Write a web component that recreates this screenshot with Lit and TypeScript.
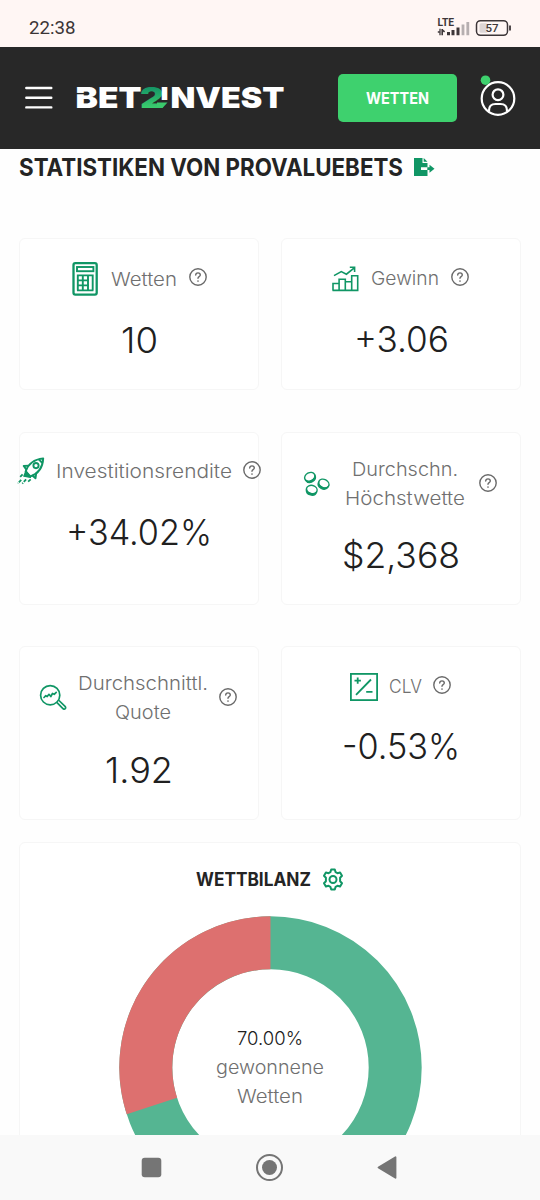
import { LitElement, html, css, svg } from "lit";
import { customElement, property } from "lit/decorators.js";

const icons: Record<string, unknown> = {
  calculator: html`<svg width="28" height="34" viewBox="0 0 28 34" fill="none" stroke="currentColor">
    <rect x="2.5" y="1.2" width="23.2" height="31.4" rx="1.8" stroke-width="2.3" />
    <rect x="6" y="5" width="16.4" height="4.2" stroke-width="1.9" />
    <path d="M6 13.4H22.4M6 18.4H18M6 23.4H18M6 28.4H22.4M6.8 12.5v16M11.8 12.5v16M17 12.5v16M21.7 12.5v16" stroke-width="1.9" />
  </svg>`,
  growth: html`<svg width="28" height="26" viewBox="0 0 28 26" fill="none" stroke="currentColor" stroke-width="1.6">
    <path d="M1.5 24.4h25.2V9.7h-6v14.7M20.7 15.7h-6.4M14.3 24.4V13.3H8.1v11.1M8.1 17.5H2v6.9" />
    <path d="M3 9.6 10.3 5.6 15.4 8.2 23.3 1.8M18.8 1.3h4.8v4.7" />
  </svg>`,
  rocket: html`<svg width="28" height="28" viewBox="0 0 28 28" fill="none" stroke="currentColor" stroke-width="1.9" stroke-linejoin="round">
    <path d="M8.6 14.5C11 7.500 16.500 2.400 26.200 1.400 25.800 11 21 16.700 13.500 19.400Z" />
    <circle cx="19" cy="8.600" r="2.600" />
    <path d="M11.800 8.700 6.700 8.900l2.700 3.700M19.300 15.700l-.8 5.600-3.400-3" />
    <path d="M9 13.800 6.800 19.200 13.500 20.400Z" fill="currentColor" stroke-width="1.200" />
    <path d="M22 2.600l3.400 3.400" />
    <path d="M5.600 17.400 2.600 20.400M4.200 22.800.8 26.400M9.100 22.400l-3.800 4.200M13.700 22.400l-3.200 2.800" stroke-width="1.800" stroke-dasharray="3.400 1.200" />
  </svg>`,
  coins: html`<svg width="28" height="26" viewBox="0 0 28 26" fill="none" stroke="currentColor">
    ${[[6.8, 5.9, -28], [20.8, 12.6, 28], [8.8, 18.6, 14]].map(
      ([x, y, r]) => svg`<g transform="translate(${x} ${y}) rotate(${r})">
        <ellipse rx="5.4" ry="4.200" stroke-width="1.400" />
        <path d="M-5.400 .6C-5 7.200 5 7.200 5.400.6 4 5-4 5-5.400.6Z" fill="currentColor" stroke-width="1.300" />
      </g>`
    )}
  </svg>`,
  search: html`<svg width="28" height="28" viewBox="0 0 28 28" fill="none" stroke="currentColor" stroke-width="1.7" stroke-linecap="round" stroke-linejoin="round">
    <circle cx="11.200" cy="11.200" r="9.600" />
    <path d="M5 13.500 6.800 11.700 8.200 12.600 10 10.300 11.800 12.500 13.500 9.500 15.200 10.300 17.200 8.300M18 18.600l6.200 6.200q1.200.8 2-.1t.1-2L20 16.500" />
  </svg>`,
  clv: html`<svg width="28" height="28" viewBox="0 0 28 28" fill="none" stroke="currentColor" stroke-width="1.8">
    <rect x=".9" y=".9" width="26.200" height="26.200" /><path d="M4.500 7.600h6.400M7.700 4.400v6.400M6 21.800 21 6.500M16.200 18.900h6.300" />
  </svg>`,
};

@customElement("help-icon")
class HelpIcon extends LitElement {
  static styles = css`:host { display: block; flex: none; width: 18px; height: 18px; color: #6a6a6a; } svg { display: block; }`;
  render() {
    return html`<svg width="18" height="18" viewBox="0 0 18 18" fill="none" stroke="currentColor" stroke-width="1.4">
      <circle cx="9" cy="9" r="8.2" />
      <path d="M6.7 7.1Q6.7 4.9 9 4.9T11.3 7.1C11.3 8.7 9 8.6 9 10.2" stroke-linecap="round" />
      <circle cx="9" cy="13" r=".85" fill="currentColor" stroke="none" />
    </svg>`;
  }
}

interface Stat {
  key: string;
  icon: string;
  lines: { text: string; width: number }[];
  value: string;
  valueWidth: number;
}

const stats: Stat[] = [
  { key: "bets", icon: "calculator", lines: [{ text: "Wetten", width: 66 }], value: "10", valueWidth: 37 },
  { key: "profit", icon: "growth", lines: [{ text: "Gewinn", width: 68 }], value: "+3.06", valueWidth: 95 },
  { key: "roi", icon: "rocket", lines: [{ text: "Investitionsrendite", width: 176 }], value: "+34.02%", valueWidth: 146 },
  { key: "stake", icon: "coins", lines: [{ text: "Durchschn.", width: 106 }, { text: "Höchstwette", width: 120 }], value: "$2,368", valueWidth: 118 },
  { key: "odds", icon: "search", lines: [{ text: "Durchschnittl.", width: 130 }, { text: "Quote", width: 56 }], value: "1.92", valueWidth: 68 },
  { key: "clv", icon: "clv", lines: [{ text: "CLV", width: 33 }], value: "-0.53%", valueWidth: 118 },
];

/** One line of text whose glyph run is spread to a given width. */
@customElement("fitted-text")
class FittedText extends LitElement {
  @property() text = "";
  @property({ type: Number }) width = 0;
  @property({ type: Number }) height = 29;
  @property({ type: Number }) base = 21;
  static styles = css`:host { display: block; flex: none; } svg { display: block; overflow: visible; } text { fill: currentColor; }`;
  render() {
    return html`<svg width=${this.width} height=${this.height}>
      <text x="0" y=${this.base} textLength=${this.width} lengthAdjust="spacingAndGlyphs">${this.text}</text>
    </svg>`;
  }
}

@customElement("stat-card")
class StatCard extends LitElement {
  @property({ attribute: false }) stat!: Stat;
  static styles = css`
    :host { display: block; box-sizing: border-box; border: 1.5px solid #f6f6f6; border-radius: 6px; background: #fff; }
    .card { display: flex; flex-direction: column; align-items: center; }
    .head { display: flex; align-items: center; justify-content: center; gap: 12px; padding-right: 2px; color: #707070; font: 350 18.5px Inter, sans-serif; }
    .icon { display: block; flex: none; color: #109665; }
    .icon svg { display: block; }
    .label { display: flex; flex-direction: column; align-items: center; }
    .value { color: #202020; font: 350 35px Inter, sans-serif; }
    .bets { padding-top: 23px; } .bets .value { margin-top: 22px; } .bets help-icon { margin-top: -4px; }
    .bets .head { padding-right: 1px; }
    .profit { padding-top: 25px; } .profit .value { margin-top: 24px; } .profit help-icon { margin-top: -3px; }
    .roi { padding-top: 24px; } .roi .value { margin-top: 24px; } .roi help-icon { margin-top: -2px; } .roi .head { gap: 11px; padding-right: 0; }
    .stake { padding-top: 22px; } .stake .value { margin-top: 20px; } .stake .head { gap: 14px; } .stake help-icon { margin-top: -2px; }
    .odds { padding-top: 22px; } .odds .value { margin-top: 21px; } .odds .head { gap: 11px; } .odds help-icon { margin-top: -2px; }
    .clv { padding-top: 25px; } .clv .value { margin-top: 23px; } .clv .head { gap: 11px; } .clv help-icon { margin-top: -3px; }
  `;
  render() {
    const s = this.stat;
    return html`<div class="card ${s.key}">
      <div class="head">
        <span class="icon">${icons[s.icon]}</span>
        <div class="label">${s.lines.map((l) => html`<fitted-text .text=${l.text} .width=${l.width}></fitted-text>`)}</div>
        <help-icon></help-icon>
      </div>
      <fitted-text class="value" .text=${s.value} .width=${s.valueWidth} .height=${44} .base=${35}></fitted-text>
    </div>`;
  }
}

@customElement("app-root")
class AppRoot extends LitElement {
  static styles = css`
    :host { display: flex; flex-direction: column; height: 1200px; overflow: hidden; background: #fefefe; font-family: Inter, sans-serif; color: #242424; }
    * { box-sizing: border-box; }
    svg { display: block; }
    .status { height: 47px; flex: none; background: #fff6f4; display: flex; align-items: center; justify-content: space-between; padding: 7px 28px 0 29px; }
    .status svg { overflow: visible; }
    .time { font: 400 18.7px Roboto, sans-serif; color: #3b3536; margin-top: 1px; }
    .lte { font: 700 10px Roboto, sans-serif; }
    .charge { font: 500 11.5px Roboto, sans-serif; }
    .header { height: 102px; flex: none; background: #282828; display: flex; align-items: center; padding: 0 23px 0 25px; }
    .logo { margin-left: 24px; overflow: visible; }
    .wordmark { font: 900 28.5px Inter, sans-serif; }
    .small-i { font-size: 17px; }
    .bet { margin-left: auto; width: 119px; height: 48px; border: 0; border-radius: 5px; background: #3ed16e; color: #fff; font: 700 15.5px Inter, sans-serif; display: flex; align-items: center; justify-content: center; padding: 0; margin-top: -1px; }
    .account { margin-left: 22px; margin-top: -7px; }
    .page { flex: 1; min-height: 0; overflow: hidden; padding: 0 19px; }
    .title { display: flex; gap: 11px; align-items: center; height: 36px; font-size: 24px; font-weight: 700; }
    .export { color: #109665; }
    .grid { display: grid; grid-template-columns: 240px 240px; column-gap: 22px; row-gap: 41.5px; grid-template-rows: 152px 173px 173.5px; margin-top: 53px; }
    .balance { margin-top: 22px; height: 480px; border: 1.5px solid #f6f6f6; border-radius: 6px; background: #fff; display: flex; flex-direction: column; align-items: center; }
    .heading { display: flex; align-items: center; gap: 11px; margin-top: 22px; height: 29px; font-size: 19px; font-weight: 700; }
    .gear { color: #109665; }
    .donut { display: grid; place-items: center; margin-top: 22px; }
    .donut > * { grid-area: 1 / 1; }
    .center { display: flex; flex-direction: column; align-items: center; font-size: 18.5px; font-weight: 350; color: #707070; }
    .percent { color: #202020; }
    .nav { height: 65px; flex: none; background: #f9f9f9; }
  `;

  render() {
    return html`
      <div class="status">
        <span class="time">22:38</span>
        <svg width="75" height="22" viewBox="0 0 75 22">
          <text class="lte" x=".5" y="9.500" fill="#3d3638" textLength="16.500" lengthAdjust="spacingAndGlyphs">LTE</text>
          <path d="M.8 16h1.500M3 12.800v6.500" stroke="#3d3638" stroke-width="1.300" />
          <path d="M5.200 13v6.200M5.200 13.800l2.400 2" stroke="#3d3638" stroke-width="1.600" fill="none" />
          <path d="M11.500 16v3.200M16 14V19.200M21 11.500V19.200" stroke="#3d3638" stroke-width="3" />
          <path d="M26 8.500V19.200M30.800 6V19.200" stroke="#b6afb0" stroke-width="2.800" />
          <rect x="39.500" y="4.700" width="31" height="14.600" rx="4" fill="none" stroke="#3d3638" stroke-width="1.500" />
          <rect x="42.500" y="7.200" width="8" height="9.600" rx="1.500" fill="#ddd6d6" />
          <path d="M73 9.500v5" stroke="#3d3638" stroke-width="1.800" />
          <text class="charge" x="48.500" y="16.200" fill="#3d3638" textLength="13">57</text>
        </svg>
      </div>
      <div class="header">
        <svg width="28" height="24" viewBox="0 0 28 24" stroke="#fff" stroke-width="2.4" stroke-linecap="round"><path d="M1.3 2h25M1.3 11.7h25M1.3 21.4h25" /></svg>
        <svg class="logo" width="208" height="36" viewBox="0 -6 208 36">
          <defs><linearGradient id="g" x1="0" y1="0" x2="0" y2="1"><stop offset=".2" stop-color="#159466" /><stop offset=".85" stop-color="#3ed16e" /></linearGradient></defs>
          <g class="wordmark" fill="#fff">
            <text x="-1.5" y="22" textLength="66" lengthAdjust="spacingAndGlyphs">BET</text>
            <text x="63" y="22" textLength="24" lengthAdjust="spacingAndGlyphs" fill="url(#g)">2</text>
            <text x="93.5" y="22" textLength="114" lengthAdjust="spacingAndGlyphs">NVEST</text>
            <text class="small-i" x="83.5" y="13.600" textLength="8" lengthAdjust="spacingAndGlyphs">I</text>
          </g>
          <path d="M-1 7.600h13" stroke="#282828" stroke-width="1.300" />
          <path d="M80 22h5.500l5-5.400H80Z" fill="#3ac96c" />
        </svg>
        <button class="bet"><fitted-text text="WETTEN" width="63" height="20" base="15.5"></fitted-text></button>
        <svg class="account" width="38" height="44" viewBox="0 0 38 44" fill="none" stroke="#fff" stroke-width="2.2">
          <circle cx="19" cy="25.5" r="16.3" /><circle cx="19" cy="21.7" r="5.4" />
          <path d="M10 38.800v-1.300q0-6.500 6.500-6.500h5q6.500 0 6.500 6.500v1.300" />
          <circle cx="6.500" cy="7.200" r="4.800" fill="#3ed16e" stroke="none" />
        </svg>
      </div>
      <div class="page">
        <div class="title">
          <fitted-text text="STATISTIKEN VON PROVALUEBETS" width="384" height="36" base="26.5"></fitted-text>
          <svg class="export" width="22" height="18" viewBox="0 0 22 18" fill="currentColor">
            <path d="M0 0h8.500v5h5v4.300H7v2.700h6.500V18H0ZM9.700 0l3.800 3.800H9.700Z" /><path d="M13.300 9.300h2.200V6.700l5 4-5 4v-2.700h-2.200Z" />
          </svg>
        </div>
        <div class="grid">${stats.map((s) => html`<stat-card .stat=${s}></stat-card>`)}</div>
        <div class="balance">
          <div class="heading">
            <fitted-text text="WETTBILANZ" width="115" height="29" base="20.5"></fitted-text>
            <svg class="gear" width="22" height="23" viewBox="0 0 22 23" fill="none" stroke="currentColor" stroke-width="2" stroke-linejoin="round">
              <circle cx="11" cy="11.500" r="3.500" />
              <path d="M9.200 1.500h3.600l.8 2.700 1.800 1 2.700-.7 1.900 3.200-1.900 2v3.600l1.900 2-1.900 3.200-2.700-.7-1.800 1-.8 2.700H9.200l-.8-2.700-1.800-1-2.700.7L2 15.300l1.900-2V9.700L2 7.700l1.900-3.200 2.700.7 1.800-1Z" />
            </svg>
          </div>
          <div class="donut">
            <svg width="303" height="303" viewBox="-151.5 -151.5 303 303" fill="none" stroke-width="53">
              <circle r="124.700" stroke="#55b592" />
              <path d="M0-124.700A124.700 124.700 0 0 0-118.600 38.530" stroke="#dd706f" />
            </svg>
            <div class="center">
              <fitted-text class="percent" text="70.00%" width="66"></fitted-text>
              <fitted-text text="gewonnene" width="108"></fitted-text>
              <fitted-text text="Wetten" width="66"></fitted-text>
            </div>
          </div>
        </div>
      </div>
      <div class="nav">
        <svg width="540" height="65" viewBox="0 0 540 65" fill="#757575">
          <rect x="141.700" y="22.700" width="19.600" height="19.600" rx="3" />
          <circle cx="269.500" cy="32.500" r="12.500" fill="none" stroke="#757575" stroke-width="2" /><circle cx="269.500" cy="32.500" r="7.500" />
          <path d="M378.500 32.500 395.500 22.200V42.800Z" stroke="#757575" stroke-width="1.800" stroke-linejoin="round" />
        </svg>
      </div>
    `;
  }
}
